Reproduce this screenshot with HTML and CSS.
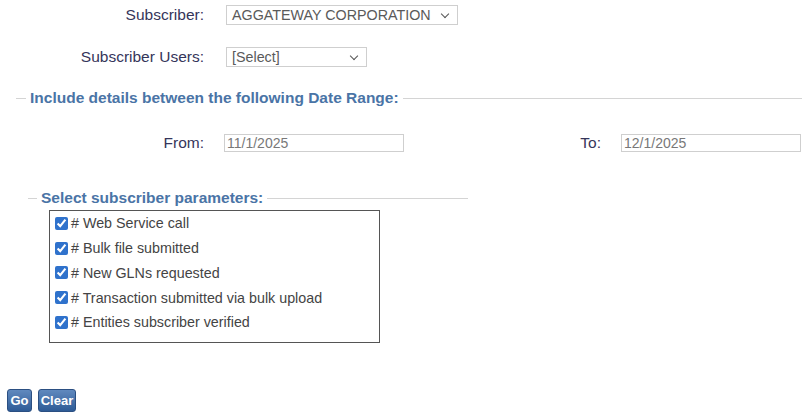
FILE: index.html
```html
<!DOCTYPE html>
<html>
<head>
<meta charset="utf-8">
<link rel="stylesheet" href="styles.css">
</head>
<body>
<div class="page">
  <div class="form-row row-first">
    <label class="lbl">Subscriber:</label>
    <span class="sel sel-wide"><span class="sel-text">AGGATEWAY CORPORATION</span></span>
  </div>
  <div class="form-row row-second">
    <label class="lbl">Subscriber Users:</label>
    <span class="sel sel-narrow"><span class="sel-text">[Select]</span></span>
  </div>

  <fieldset class="fs fs-date">
    <legend class="legend">Include details between the following Date Range:</legend>
    <div class="date-row">
      <label class="lbl">From:</label>
      <span class="txt">11/1/2025</span>
      <label class="lbl">To:</label>
      <span class="txt">12/1/2025</span>
    </div>
  </fieldset>

  <fieldset class="fs fs-params">
    <legend class="legend">Select subscriber parameters:</legend>
    <div class="param-box">
      <label class="param"><input type="checkbox" checked class="cb"># Web Service call</label>
      <label class="param"><input type="checkbox" checked class="cb"># Bulk file submitted</label>
      <label class="param"><input type="checkbox" checked class="cb"># New GLNs requested</label>
      <label class="param"><input type="checkbox" checked class="cb"># Transaction submitted via bulk upload</label>
      <label class="param"><input type="checkbox" checked class="cb"># Entities subscriber verified</label>
    </div>
  </fieldset>

  <div class="buttons">
    <button class="btn btn-go">Go</button>
    <button class="btn btn-clear">Clear</button>
  </div>
</div>
</body>
</html>
```
FILE: styles.css
```css
html, body {
  margin: 0;
  padding: 0;
  background: #ffffff;
}
body {
  font-family: "Liberation Sans", Arial, sans-serif;
  font-size: 15.5px;
  color: #35355a;
}
.page {
  padding-top: 5px;
}
.form-row {
  display: grid;
  grid-template-columns: 204px auto;
  column-gap: 22px;
  align-items: center;
  height: 20px;
}
.row-second {
  margin-top: 22px;
}
.lbl {
  text-align: right;
  color: #35355a;
  white-space: nowrap;
}
.sel {
  position: relative;
  display: flex;
  align-items: center;
  box-sizing: border-box;
  height: 20px;
  border: 1px solid #cfcfcf;
  background: #fff;
  padding-left: 5px;
  color: #5a5a5a;
  font-size: 14.3px;
}
.sel::after {
  content: "";
  position: absolute;
  top: 5px;
  right: 9px;
  width: 5px;
  height: 5px;
  border-right: 1.3px solid #555;
  border-bottom: 1.3px solid #555;
  transform: rotate(45deg);
}
.sel-wide {
  width: 232px;
}
.sel-narrow {
  width: 141px;
}
.fs {
  border: 0;
  border-top: 1px solid #d4d4d4;
  padding: 0 0 0 10px;
}
.legend {
  padding: 0 4px;
  font-weight: bold;
  font-size: 15.5px;
  color: #4a74a6;
  line-height: 18px;
}
.fs-date {
  margin: 22px 2px 0 16px;
}
.date-row {
  display: grid;
  grid-template-columns: 178px 180px 177px 180px;
  column-gap: 20px;
  align-items: center;
  margin-top: 27px;
  height: 18px;
}
.txt {
  box-sizing: border-box;
  height: 18px;
  border: 1px solid #cfcfcf;
  padding-left: 2px;
  display: flex;
  align-items: center;
  color: #787878;
  font-size: 14px;
}
.fs-params {
  margin: 37px 0 0 28px;
  width: 431px;
  padding-left: 9px;
}
.param-box {
  margin: 3px 0 0 12px;
  width: 331px;
  box-sizing: border-box;
  border: 1px solid #555;
  padding: 0 0 7px 5px;
}
.param {
  display: flex;
  align-items: center;
  height: 24.75px;
  font-size: 14.3px;
  color: #444;
}
.cb {
  margin: 0 3px 0 0;
  width: 13px;
  height: 13px;
  accent-color: #2f72cc;
}
.buttons {
  display: flex;
  gap: 6px;
  margin: 46px 0 0 7px;
}
.btn {
  height: 23px;
  box-sizing: border-box;
  border: 1px solid #2b4f82;
  border-radius: 3px;
  background: linear-gradient(#6089be, #2e5b96);
  color: #fff;
  font-family: "Liberation Sans", Arial, sans-serif;
  font-weight: bold;
  font-size: 13px;
  padding: 0;
}
.btn-go {
  width: 25px;
}
.btn-clear {
  width: 38px;
}
```
